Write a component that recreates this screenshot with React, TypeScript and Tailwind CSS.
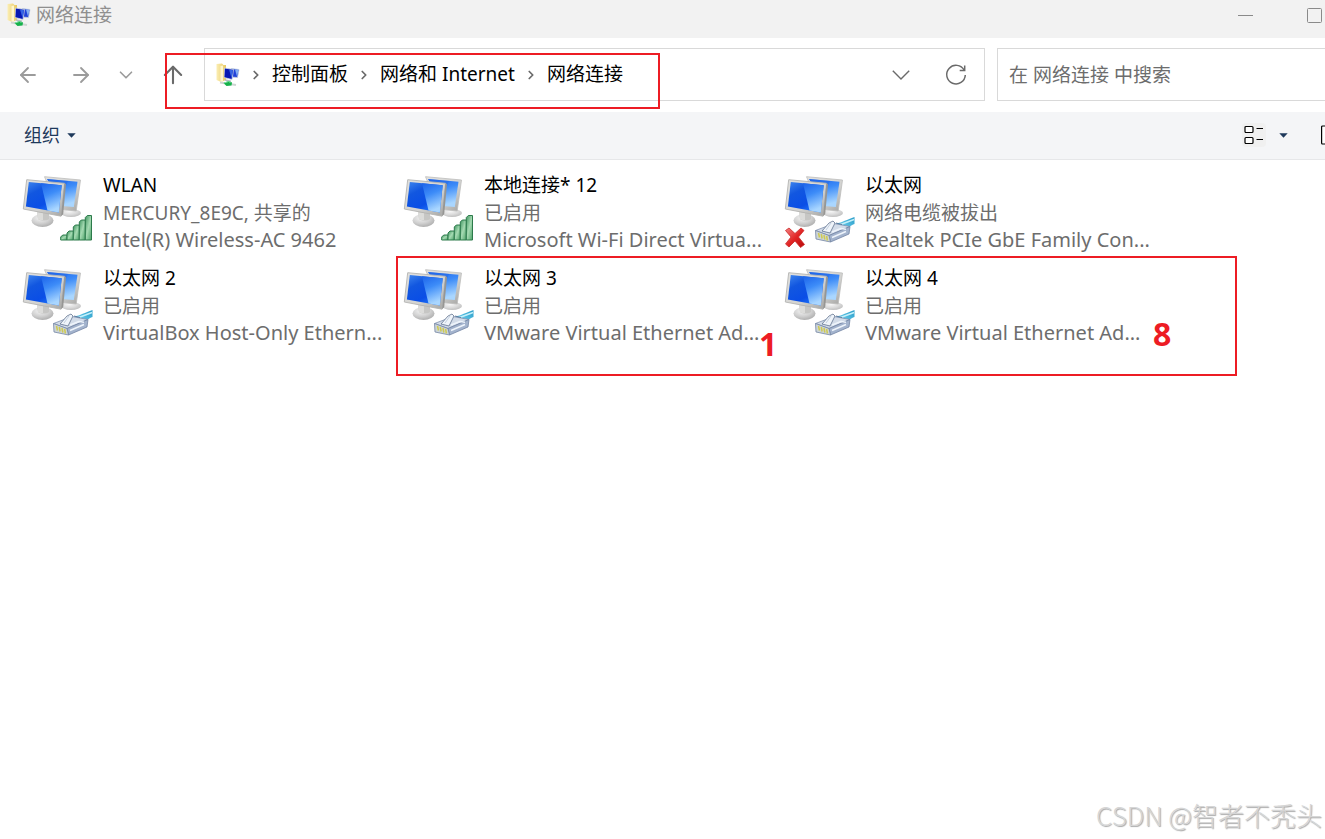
import { ArrowLeft, ArrowRight, ArrowUp, ChevronDown, ChevronRight } from 'lucide-react';

type AdapterKind = 'wifi' | 'ethernet' | 'unplugged';

interface Adapter {
  name: string;
  status: string;
  device: string;
  kind: AdapterKind;
}

const adapters: Adapter[] = [
  { name: 'WLAN', status: 'MERCURY_8E9C, 共享的', device: 'Intel(R) Wireless-AC 9462', kind: 'wifi' },
  { name: '本地连接* 12', status: '已启用', device: 'Microsoft Wi-Fi Direct Virtua...', kind: 'wifi' },
  { name: '以太网', status: '网络电缆被拔出', device: 'Realtek PCIe GbE Family Con...', kind: 'unplugged' },
  { name: '以太网 2', status: '已启用', device: 'VirtualBox Host-Only Ethern...', kind: 'ethernet' },
  { name: '以太网 3', status: '已启用', device: 'VMware Virtual Ethernet Ad...', kind: 'ethernet' },
  { name: '以太网 4', status: '已启用', device: 'VMware Virtual Ethernet Ad...', kind: 'ethernet' },
];

const path = ['控制面板', '网络和 Internet', '网络连接'];

// Gradients shared by all the icons
const IconDefs = () => (
  <svg className="absolute size-0" aria-hidden="true">
    <defs>
      <linearGradient id="screen" x1="0" y1="0" x2="0.6" y2="1">
        <stop offset="0" stopColor="#3f86ee" />
        <stop offset="0.35" stopColor="#1257e0" />
        <stop offset="0.75" stopColor="#0a4ee6" />
        <stop offset="1" stopColor="#1f74fa" />
      </linearGradient>
      <linearGradient id="glare" x1="0" y1="0" x2="0.3" y2="1">
        <stop offset="0" stopColor="#1c63ea" />
        <stop offset="0.45" stopColor="#3d8cf8" />
        <stop offset="1" stopColor="#a9d6ff" />
      </linearGradient>
      <linearGradient id="frame" x1="0" y1="0" x2="1" y2="1">
        <stop offset="0" stopColor="#e2e2e0" />
        <stop offset="0.6" stopColor="#d2d2d0" />
        <stop offset="1" stopColor="#a3a3a1" />
      </linearGradient>
      <radialGradient id="stand" cx="0.4" cy="0.3" r="0.7">
        <stop offset="0" stopColor="#f4f4f4" />
        <stop offset="0.6" stopColor="#d0d0d0" />
        <stop offset="1" stopColor="#b0b0b0" />
      </radialGradient>
      <linearGradient id="bars" x1="0" y1="0" x2="1" y2="1">
        <stop offset="0" stopColor="#3f9560" />
        <stop offset="0.5" stopColor="#a5dab2" />
        <stop offset="1" stopColor="#4ca268" />
      </linearGradient>
      <linearGradient id="cable" x1="0" y1="1" x2="1" y2="0">
        <stop offset="0" stopColor="#bfe8f4" />
        <stop offset="0.5" stopColor="#52bce0" />
        <stop offset="1" stopColor="#2a9cc8" />
      </linearGradient>
      <linearGradient id="cross" x1="0" y1="0" x2="1" y2="1">
        <stop offset="0" stopColor="#f58080" />
        <stop offset="0.5" stopColor="#e22626" />
        <stop offset="1" stopColor="#b80808" />
      </linearGradient>
      <linearGradient id="folder" x1="0" y1="0" x2="1" y2="0">
        <stop offset="0" stopColor="#fbeeb4" />
        <stop offset="1" stopColor="#e8c860" />
      </linearGradient>
    </defs>
  </svg>
);

const SignalBars = () => (
  <g fill="url(#bars)" stroke="#2c7a4b" strokeWidth="1">
    <path d="M38.7 65v-3l2-2h4.3v5z" />
    <path d="M45 65v-7l2-2h4.300v9z" />
    <path d="M51.3 65V52l2-2h4v15z" />
    <path d="M57.3 65V47l2-2h4v20z" />
    <path d="M63.3 65V42.500l2-2h4.200V65z" />
  </g>
);

const Plug = () => (
  <g strokeLinejoin="round" strokeWidth="0.800">
    <path d="M52 48.500c6-1 11-4 18.500-6.500v7c-4 1-6 4.500-11 6.500z" fill="url(#cable)" />
    <path d="M54 50c6-1 10-3.500 16-5.500" fill="none" stroke="#c4f0fa" strokeWidth="1.500" />
    <path d="M31.500 55.500 50 48.500l16 3L45 60.500z" fill="#d3dce9" stroke="#8091ae" />
    <path d="M45 60.500l21-9-1 7.500-18.500 8z" fill="#a3b3cd" stroke="#7485a4" />
    <path d="M31.500 55.500 45 60.500l1.500 6.500-14.500-3z" fill="#ccd4d8" stroke="#7485a4" />
    <path d="M34.500 58l1 4.500M37.300 59l.8 4.500M40 60l.8 4.500M42.600 61l.8 4.500" stroke="#cfca52" strokeWidth="1.500" />
    <path d="M38 56l7-8 4-2 2 2-5 10z" fill="#eff4fa" stroke="#62738f" />
    <path d="M42 55l5-7" stroke="#b9c6d8" />
    <path d="M48 57l9-3.500 5 .7M48 62.500l14-6" fill="none" stroke="#eef4fb" strokeWidth="1.600" />
    <path d="M52 48l6 1.500" stroke="#52698f" />
  </g>
);

const AdapterIcon = ({ kind }: { kind: AdapterKind }) => (
  <svg viewBox="0 0 72 74" className="mt-1 h-[74px] w-[72px] shrink-0" aria-hidden="true">
    <ellipse cx="49" cy="38" rx="10" ry="4" fill="url(#stand)" opacity="0.800" />
    <path d="M22.500 1.700 58.500 5l-4.300 31L36 34z" fill="url(#frame)" stroke="#bdbdbb" strokeWidth="0.800" strokeLinejoin="round" />
    <path d="M25 4 55.500 6.800 51.800 32 40 31z" fill="url(#glare)" />
    <path d="M25 4 46 6 40 20z" fill="#2468e6" opacity="0.500" />
    <ellipse cx="20.500" cy="45.500" rx="11" ry="6.500" fill="url(#stand)" />
    <path d="M15 36l12 2v6c-3 2-8 2-11 0z" fill="#c6c6c4" />
    <path d="M15 37l6 1v7c-2 0-4 0-5-1z" fill="#dcdcda" />
    <path d="M4.700 4.700 42.500 8.300 39 41.200 1.300 34z" fill="url(#frame)" stroke="#b4b4b2" strokeWidth="0.900" strokeLinejoin="round" />
    <path d="M42.500 8.300 39 41.200l2.200-2L44 9z" fill="#969694" />
    <path d="M6.800 7 39.700 10.200 36.800 37.500 3.900 31.500z" fill="url(#screen)" />
    <path d="M19 8.200 39.700 10.200 36.800 37.500 25.500 35.400z" fill="url(#glare)" />
    {kind === 'wifi' ? <SignalBars /> : <Plug />}
    {kind === 'unplugged' && (
      <path
        d="M1.500 55.500 5 53l6 5.500L17 53l3 2.500-5.500 6.500 6 7.500-4 3L11 66l-6 6-3.500-3L7 62z"
        fill="url(#cross)"
        stroke="#c92a2a"
        strokeWidth="0.800"
        strokeLinejoin="round"
      />
    )}
  </svg>
);

const NetworkFolderIcon = () => (
  <svg viewBox="0 0 24 24" className="size-6 shrink-0" aria-hidden="true">
    <path d="M.5 1 6 .5l1.500 1.500H10v15l-5 2-4.500-2z" fill="url(#folder)" />
    <path d="M4.500 3 7 2.500v16l-2.500.8z" fill="#fff6cd" />
    <path d="M15 5.500 23 6.500 21.500 14.500 15 14z" fill="#2142d8" stroke="#c4cfdf" strokeWidth="0.800" />
    <path d="M19 6.500l3.500.5-1.500 6.500z" fill="#82aef2" />
    <path d="M8.500 5l9 1.500L16 16.500l-8-2z" fill="#0718b4" stroke="#d3dbe4" strokeWidth="0.800" />
    <path d="M13 6.500l4 .7-1.400 8z" fill="#3564e4" />
    <path d="M9 17l6 1.300" stroke="#b4bcc4" strokeWidth="1.500" />
    <path d="M4 19.500l16 2.500" stroke="#cdd5d2" strokeWidth="2" />
    <path d="M7.500 20l5-2 3.500 1.500-.5 3-5 .5z" fill="#15b14a" />
    <path d="M8 20l4.500-1.500 2 1" fill="none" stroke="#7de0a0" />
  </svg>
);

const Caret = () => (
  <svg viewBox="0 0 9 5" className="h-[5px] w-[9px]" aria-hidden="true">
    <path d="M.3.3h8.400L4.500 4.800z" fill="#1e395b" />
  </svg>
);

const TitleBar = () => (
  <header className="flex h-[38px] items-center justify-between bg-[#f2f2f2] pl-[7px] pr-[3px]">
    <div className="flex items-center gap-[5px] pb-2 text-[#8f8f8f]">
      <NetworkFolderIcon />
      <h1>网络连接</h1>
    </div>
    <div className="flex items-center gap-[54px] pb-2 text-[#8a8a8a]">
      <button aria-label="最小化">
        <svg viewBox="0 0 15 15" className="size-[15px]">
          <path d="M0 7.500h15" stroke="currentColor" />
        </svg>
      </button>
      <button aria-label="最大化">
        <svg viewBox="0 0 15 15" className="size-[15px]" fill="none">
          <rect x="0.500" y="0.500" width="14" height="14" rx="1" stroke="currentColor" />
        </svg>
      </button>
    </div>
  </header>
);

const AddressBar = () => (
  <div className="relative flex h-[74px] items-center bg-white pb-px">
    <nav className="flex w-[204px] shrink-0 items-center pl-4 text-[#9b9b9b]">
      <button aria-label="后退"><ArrowLeft size={24} strokeWidth={1.8} /></button>
      <button aria-label="前进" className="ml-[29px]"><ArrowRight size={24} strokeWidth={1.8} /></button>
      <button aria-label="最近浏览的位置" className="ml-[22px]"><ChevronDown size={22} strokeWidth={1.8} /></button>
      <button aria-label="上移" className="ml-[22px] text-[#6a6a6a]"><ArrowUp size={28} strokeWidth={1.8} /></button>
    </nav>
    <div className="flex h-[53px] flex-1 items-center border border-[#d9d9d9] pl-[11px] pr-4">
      <NetworkFolderIcon />
      {path.map((part) => (
        <div key={part} className="flex items-center">
          <ChevronRight size={14} strokeWidth={3} className="mx-[9px] text-[#6a6a6a]" />
          <a href="#" className="whitespace-nowrap">{part}</a>
        </div>
      ))}
      <div className="ml-auto flex items-center gap-[34px] text-[#6a6a6a]">
        <button aria-label="以前的位置">
          <svg viewBox="0 0 18 10" className="h-[10px] w-[18px]" fill="none" stroke="currentColor" strokeWidth="1.400">
            <path d="M.8.8 9 9 17.200.8" />
          </svg>
        </button>
        <button aria-label="刷新">
          <svg viewBox="0 0 24 24" className="size-6" fill="none" stroke="currentColor" strokeWidth="1.500">
            <path d="M20.200 7.200A9.300 9.300 0 1 0 21.300 12" />
            <path d="M20.700 2.500v5h-5" />
          </svg>
        </button>
      </div>
    </div>
    <input
      type="search"
      aria-label="搜索"
      placeholder="在 网络连接 中搜索"
      className="ml-3 h-[53px] w-[328px] shrink-0 border border-r-0 border-[#d9d9d9] px-[11px] placeholder:text-[#6d6d6d]"
    />
    <div className="pointer-events-none absolute left-[165px] top-[15px] h-14 w-[495px] border-2 border-[#ed1c24]" />
  </div>
);

const Toolbar = () => (
  <div className="flex h-12 items-center justify-between overflow-hidden border-b border-[#e6e7e9] bg-[#f4f5f7] pb-px pl-6">
    <button className="flex items-center gap-[7px] text-lg text-[#1e395b]">
      组织
      <Caret />
    </button>
    <div className="flex items-center">
      <button aria-label="更改视图" className="rounded bg-[#f0f0f0] p-[2px]">
        <svg viewBox="0 0 20 20" className="size-5" fill="none" stroke="#000">
          <rect x="1" y="1.500" width="8" height="6" rx="1" fill="#fff" strokeWidth="1.200" />
          <rect x="1" y="12.500" width="8" height="6" rx="1" fill="#fff" strokeWidth="1.200" />
          <path d="M12.500 3.500H19M12.500 14.500H19" strokeWidth="1.200" />
        </svg>
      </button>
      <button aria-label="更多选项" className="ml-[13px]"><Caret /></button>
      <button aria-label="预览窗格" className="-mr-4 ml-[33px]">
        <svg viewBox="0 0 20 20" className="size-5" fill="none">
          <rect x="0.600" y="1" width="18" height="18" rx="1" fill="#fff" stroke="#000" strokeWidth="1.200" />
        </svg>
      </button>
    </div>
  </div>
);

const AdapterItem = ({ adapter }: { adapter: Adapter }) => (
  <button className="flex h-[93px] items-start gap-[9px] whitespace-nowrap text-left">
    <AdapterIcon kind={adapter.kind} />
    <span className="flex flex-col text-[#6d6d6d]">
      <span className="leading-7 text-black">{adapter.name}</span>
      <span className="leading-7">{adapter.status}</span>
      <span className="text-[20px] leading-[26px]">{adapter.device}</span>
    </span>
  </button>
);

const App = () => {
  return (
    <div className="relative flex min-h-screen flex-col overflow-hidden bg-white font-['Noto_Sans','Noto_Sans_CJK_SC',sans-serif] text-[19px] text-black">
      <IconDefs />
      <TitleBar />
      <AddressBar />
      <Toolbar />
      <main className="relative grid grid-cols-[repeat(auto-fill,381px)] pl-[22px] pt-[11px]">
        {adapters.map((adapter) => (
          <AdapterItem key={adapter.name} adapter={adapter} />
        ))}
        {/* marked adapters, with their notes */}
        <div className="pointer-events-none absolute left-[396px] top-24 h-[120px] w-[841px] border-2 border-[#ed1c24] text-[32px] font-bold leading-8 text-[#ed1c24]">
          <span className="absolute left-[361px] top-[70px]">1</span>
          <span className="absolute left-[755px] top-[60px]">8</span>
        </div>
      </main>
      <div className="absolute bottom-[6px] right-[3px] font-['Noto_Sans_CJK_SC',sans-serif] text-[26px] font-light leading-9 text-[#d6d6d6] [text-shadow:1px_1px_1px_#a8a8a8]">
        CSDN @智者不秃头
      </div>
    </div>
  );
};

export default App;
